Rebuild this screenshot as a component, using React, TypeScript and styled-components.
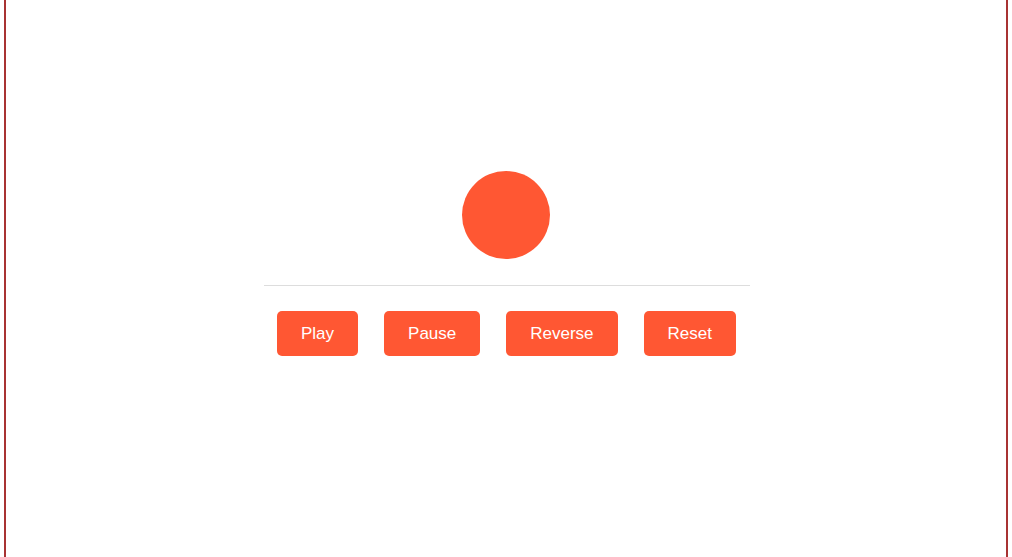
import React from "react";
import styled, { createGlobalStyle } from "styled-components";

const Global = createGlobalStyle`
  html, body { margin: 0; padding: 0; background: #fff; }
  body { font-family: "Liberation Sans", Arial, sans-serif; }
`;

const Frame = styled.div`
  box-sizing: border-box;
  width: 1004px;
  min-height: 557px;
  margin: 0 auto;
  border-left: 2px solid #a83232;
  border-right: 2px solid #a83232;
  display: flex;
  flex-direction: column;
  align-items: center;
  padding-top: 171px;
`;

const Ball = styled.div`
  width: 88px;
  height: 88px;
  border-radius: 50%;
  background: #ff5733;
`;

const Track = styled.div`
  width: 486px;
  height: 1px;
  background: #dddddd;
  margin-top: 26px;
  margin-left: 1px;
`;

const Controls = styled.div`
  display: flex;
  gap: 26px;
  margin-top: 25px;
  margin-left: 1px;
`;

const Button = styled.button`
  height: 45px;
  padding: 0 24px;
  border: none;
  border-radius: 5px;
  background: #ff5733;
  color: #fff;
  font-family: "Liberation Sans", Arial, sans-serif;
  font-size: 17px;
  cursor: pointer;
`;

export default function App() {
  return (
    <>
      <Global />
      <Frame>
        <Ball />
        <Track />
        <Controls>
          <Button>Play</Button>
          <Button>Pause</Button>
          <Button>Reverse</Button>
          <Button>Reset</Button>
        </Controls>
      </Frame>
    </>
  );
}
